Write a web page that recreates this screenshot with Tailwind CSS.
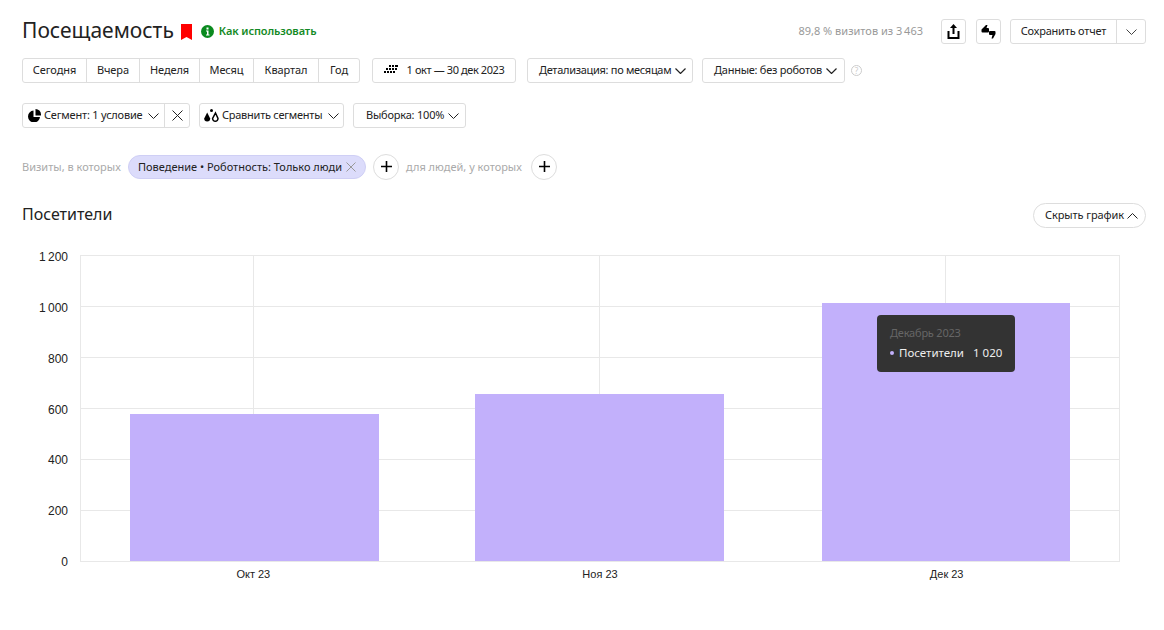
<!DOCTYPE html>
<html lang="ru">
<head>
    <meta charset="UTF-8">
    <title>Посещаемость</title>
    <script src="https://cdn.jsdelivr.net/npm/@tailwindcss/browser@4"></script>
</head>
<body class="bg-white text-[#222] font-['Noto_Sans',sans-serif] text-[11px] tracking-[-0.1px] w-[1164px] h-[630px] overflow-hidden whitespace-nowrap">
    <div class="pl-[22px] pr-[18px]">
        <!-- header -->
        <div class="flex items-center h-[25px] mt-[19px]">
            <h1 class="text-[21px] leading-[25px] tracking-normal -mt-[3px]">Посещаемость</h1>
            <svg class="ml-[7px] mt-[1px] shrink-0" width="11" height="17" viewBox="0 0 11 17"><path d="M0 0h11v16l-5.500-3L0 16z" fill="#f00"/></svg>
            <svg class="ml-[9px] mt-[-1px] shrink-0" width="13" height="13" viewBox="0 0 13 13"><circle cx="6.500" cy="6.500" r="6.500" fill="#0a8a1f"/><path d="M5 5.500h2.500v4h1v1h-3.500v-1h1v-3h-1z M5.500 2.500h2v2h-2z" fill="#fff"/></svg>
            <span class="ml-[5px] font-semibold text-[#138a25]">Как использовать</span>
            <span class="ml-auto text-[#999] tracking-normal">89,8 % визитов из 3&thinsp;463</span>
            <button class="ml-[18px] w-[25px] h-[25px] border border-[#ddd] rounded-[3px] flex items-center justify-center">
                <svg width="13" height="15" viewBox="0 0 13 15"><path d="M6.500 0L10 4H7.500v6h-2V4H3z" fill="#000"/><path d="M1.500 7v7h10V7" fill="none" stroke="#000" stroke-width="2"/></svg>
            </button>
            <button class="ml-[10px] w-[25px] h-[25px] border border-[#ddd] rounded-[3px] flex items-center justify-center">
                <svg width="15" height="14" viewBox="0 0 15 14"><path d="M5 0h1.500L5.500 3h1.500a1 1 0 0 1 1 1v2.500a1 1 0 0 1-1 1H1.500a1 1 0 0 1-1-1V4.500z M9 6h4.500a1 1 0 0 1 1 1v2L12 13.500h-1.500l1-3.500H9a1 1 0 0 1-1-1V7a1 1 0 0 1 1-1z" fill="#000"/></svg>
            </button>
            <div class="ml-[9px] flex h-[25px] border border-[#ddd] rounded-[3px]">
                <button class="w-[106px] border-r border-[#ddd] tracking-[-0.2px]">Сохранить отчет</button>
                <button class="w-[28px] flex items-center justify-center">
                    <svg width="11" height="6" viewBox="0 0 11 6"><path d="M0.500 0.500l5 5 5-5" fill="none" stroke="#444"/></svg>
                </button>
            </div>
        </div>

        <!-- period row -->
        <div class="flex items-center h-[25px] mt-[14px]">
            <div class="flex h-full border border-[#ddd] rounded-[3px] w-[338px]">
                <button class="w-[64px] border-r border-[#ddd]">Сегодня</button>
                <button class="w-[53px] border-r border-[#ddd]">Вчера</button>
                <button class="w-[60px] border-r border-[#ddd]">Неделя</button>
                <button class="w-[54px] border-r border-[#ddd]">Месяц</button>
                <button class="w-[65px] border-r border-[#ddd]">Квартал</button>
                <button class="flex-1">Год</button>
            </div>
            <button class="ml-[12px] w-[144px] h-full border border-[#ddd] rounded-[3px] flex items-center justify-center gap-[9px] tracking-[-0.4px]">
                <svg class="shrink-0 -mt-[2px]" width="14" height="9" viewBox="0 0 14 9" fill="#000"><path d="M5 0h2v2H5zM8 0h2v2H8zM11 0h3v2h-3zM2 3h2v2H2zM5 3h2v2H5zM8 3h2v2H8zM11 3h2v2h-2zM0 6h2v2H0zM3 6h2v2H3zM6 6h2v2H6zM9 6h2v2H9z"/></svg>
                <span>1 окт — 30 дек 2023</span>
            </button>
            <button class="ml-[11px] w-[166px] h-full border border-[#ddd] rounded-[3px] flex items-center gap-[4px] pl-[11px] tracking-[-0.3px]">
                Детализация: по месяцам
                <svg class="shrink-0" width="11" height="6" viewBox="0 0 11 6"><path d="M0.500 0.500l5 5 5-5" fill="none" stroke="#222" stroke-width="1.200"/></svg>
            </button>
            <button class="ml-[9px] w-[143px] h-full border border-[#ddd] rounded-[3px] flex items-center gap-[4px] pl-[11px] tracking-[-0.25px]">
                Данные: без роботов
                <svg class="shrink-0" width="11" height="6" viewBox="0 0 11 6"><path d="M0.500 0.500l5 5 5-5" fill="none" stroke="#222" stroke-width="1.200"/></svg>
            </button>
            <span class="ml-[6px] w-[11px] h-[11px] rounded-full border border-[#ccc] text-[#ccc] text-[8px] leading-[9px] text-center">?</span>
        </div>

        <!-- segment row -->
        <div class="flex items-center h-[25px] mt-[20px]">
            <div class="flex h-full border border-[#ddd] rounded-[3px] w-[168px]">
                <button class="w-[142px] border-r border-[#ddd] flex items-center pl-[5px] gap-[3px] tracking-[-0.2px]">
                    <svg class="shrink-0" width="13" height="13" viewBox="0 0 13 13" fill="#000"><path d="M5.500 1.500v6.500h6.500A6 6 0 1 1 5.500 1.500z"/><path d="M7.500 0a5.500 5.500 0 0 1 5.500 5.500v1H7.500z"/></svg>
                    <span>Сегмент: 1 условие</span>
                    <svg class="ml-[3px] shrink-0" width="11" height="6" viewBox="0 0 11 6"><path d="M0.500 0.500l5 5 5-5" fill="none" stroke="#222"/></svg>
                </button>
                <button class="flex-1 flex items-center justify-center">
                    <svg width="11" height="11" viewBox="0 0 11 11"><path d="M0.500 0.500l10 10M10.500 0.500l-10 10" stroke="#222"/></svg>
                </button>
            </div>
            <button class="ml-[9px] w-[145px] h-full border border-[#ddd] rounded-[3px] flex items-center pl-[4px] gap-[3px] tracking-[-0.25px]">
                <svg class="shrink-0" width="15" height="14" viewBox="0 0 15 14"><path d="M3.200 3.500L6.200 9.500a3 3 0 1 1-6 0z" fill="#000"/><path d="M11.500 4l2.500 5.500a2.700 2.700 0 1 1-5.400 0z" fill="none" stroke="#000" stroke-width="1.500"/><circle cx="7.500" cy="1.600" r="1.500" fill="#000"/></svg>
                <span>Сравнить сегменты</span>
                <svg class="ml-[3px] shrink-0" width="11" height="6" viewBox="0 0 11 6"><path d="M0.500 0.500l5 5 5-5" fill="none" stroke="#222"/></svg>
            </button>
            <button class="ml-[9px] w-[113px] h-full border border-[#ddd] rounded-[3px] flex items-center gap-[4px] pl-[12px] tracking-[-0.2px]">
                Выборка: 100%
                <svg class="shrink-0" width="11" height="6" viewBox="0 0 11 6"><path d="M0.500 0.500l5 5 5-5" fill="none" stroke="#222"/></svg>
            </button>
        </div>

        <!-- filter row -->
        <div class="flex items-center h-[25px] mt-[26px]">
            <span class="w-[106px] text-[#aaa] tracking-normal pt-[1px]">Визиты, в которых</span>
            <div class="w-[238px] h-[24px] rounded-full bg-[#dcdcfb] border border-[#cfcff5] flex items-center pl-[9px] gap-[4px] tracking-normal">
                <span class="pt-[1px]">Поведение • Роботность: Только люди</span>
                <svg class="shrink-0" width="10" height="10" viewBox="0 0 10 10"><path d="M0.500 0.500l9 9M9.500 0.500l-9 9" stroke="#999"/></svg>
            </div>
            <button class="ml-[7px] w-[26px] h-[26px] rounded-full border border-[#ddd] flex items-center justify-center">
                <svg width="11" height="11" viewBox="0 0 11 11"><path d="M5.500 0v11M0 5.500h11" stroke="#000" stroke-width="1.600"/></svg>
            </button>
            <span class="ml-[7px] w-[125px] text-[#aaa] tracking-normal pt-[1px]">для людей, у которых</span>
            <button class="w-[26px] h-[26px] rounded-full border border-[#ddd] flex items-center justify-center">
                <svg width="11" height="11" viewBox="0 0 11 11"><path d="M5.500 0v11M0 5.500h11" stroke="#000" stroke-width="1.600"/></svg>
            </button>
        </div>

        <!-- chart heading -->
        <div class="flex items-center justify-between h-[25px] mt-[24px]">
            <h2 class="text-[16px] leading-[20px] tracking-normal -mt-[4px]">Посетители</h2>
            <button class="w-[113px] h-[25px] rounded-full border border-[#ddd] flex items-center gap-[3px] pl-[11px]">
                Скрыть график
                <svg class="shrink-0" width="11" height="6" viewBox="0 0 11 6"><path d="M0.500 5.500l5-5 5 5" fill="none" stroke="#222"/></svg>
            </button>
        </div>

        <!-- chart -->
        <div class="flex mt-[27px] font-['Liberation_Sans',sans-serif] text-[#222] tracking-normal">
            <div class="w-[46px] h-[307px] relative text-[12px] leading-[14px] text-right">
                <span class="absolute right-0 top-[-5px]">1&thinsp;200</span>
                <span class="absolute right-0 top-[46px]">1&thinsp;000</span>
                <span class="absolute right-0 top-[97px]">800</span>
                <span class="absolute right-0 top-[148px]">600</span>
                <span class="absolute right-0 top-[198px]">400</span>
                <span class="absolute right-0 top-[249px]">200</span>
                <span class="absolute right-0 top-[300px]">0</span>
            </div>
            <div class="ml-[12px] w-[1040px]">
                <div class="relative h-[307px] border border-[#e8e8e8]">
                    <!-- horizontal grid -->
                    <div class="absolute inset-0 flex flex-col">
                        <div class="flex-1 border-b border-[#e8e8e8]"></div>
                        <div class="flex-1 border-b border-[#e8e8e8]"></div>
                        <div class="flex-1 border-b border-[#e8e8e8]"></div>
                        <div class="flex-1 border-b border-[#e8e8e8]"></div>
                        <div class="flex-1 border-b border-[#e8e8e8]"></div>
                        <div class="flex-1"></div>
                    </div>
                    <!-- columns -->
                    <div class="absolute inset-0 grid grid-cols-[346px_346px_346px]">
                        <div class="relative flex items-end justify-center">
                            <div class="absolute left-[172px] top-0 bottom-0 w-px bg-[#e8e8e8]"></div>
                            <div class="relative w-[249px] h-[147px] bg-[#c2b0fb]"></div>
                        </div>
                        <div class="relative flex items-end justify-center pr-[2px]">
                            <div class="absolute left-[172px] top-0 bottom-0 w-px bg-[#e8e8e8]"></div>
                            <div class="relative w-[249px] h-[167px] bg-[#c2b0fb]"></div>
                        </div>
                        <div class="relative flex items-end justify-center">
                            <div class="absolute left-[172px] top-0 bottom-0 w-px bg-[#e8e8e8]"></div>
                            <div class="relative w-[248px] h-[258px] bg-[#c2b0fb]"></div>
                        </div>
                    </div>
                    <!-- tooltip -->
                    <div class="absolute left-[796px] top-[59px] w-[138px] h-[57px] rounded-[4px] bg-[#333] font-['Noto_Sans',sans-serif] pl-[13px] pt-[10px]">
                        <div class="text-[#666] text-[11px] tracking-[-0.2px] leading-[16px]">Декабрь 2023</div>
                        <div class="flex items-center text-[#eee] text-[11.5px] leading-[16px] mt-[4px]">
                            <span class="w-[4px] h-[4px] rounded-full bg-[#c2b0fb] mr-[5px]"></span>
                            <span>Посетители</span>
                            <span class="ml-[9px]">1 020</span>
                        </div>
                    </div>
                </div>
                <div class="grid grid-cols-3 text-center text-[11px] leading-[13px] mt-[6px]">
                    <span>Окт 23</span>
                    <span>Ноя 23</span>
                    <span>Дек 23</span>
                </div>
            </div>
        </div>
    </div>
</body>
</html>
